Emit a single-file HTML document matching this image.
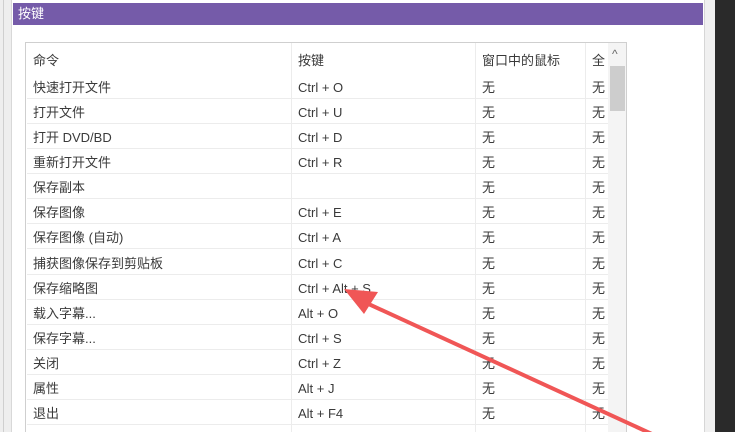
<!DOCTYPE html>
<html><head><meta charset="utf-8"><style>
html,body{margin:0;width:735px;height:432px;overflow:hidden}
body{background:#fff;font-family:"Liberation Sans","Noto Sans CJK SC",sans-serif;position:relative;font-size:13px;color:#3a3a3a}
.abs{position:absolute}
.row{position:absolute;left:27px;width:581px;height:25px;border-bottom:1px solid #ececec;box-sizing:border-box}
.row span{position:absolute;top:1px;height:25px;line-height:25px;white-space:nowrap}
.c1{left:6px}.c2{left:271px}.c3{left:455px}.c4{left:565px}
</style></head><body>
<div class="abs" style="left:0;top:0;width:11px;height:432px;background:#eeeeee"></div>
<div class="abs" style="left:3px;top:0;width:1px;height:432px;background:#cfcfcf"></div>
<div class="abs" style="left:11px;top:0;width:1px;height:432px;background:#d8d8d8"></div>
<div class="abs" style="left:13px;top:3px;width:690px;height:22px;background:#755ba9;color:#fff;font-size:13px;line-height:22px;padding-left:5px;box-sizing:border-box">按键</div>
<div class="abs" style="left:704px;top:0;width:11px;height:432px;background:#f0f0f0;border-left:1px solid #d6d6d6;box-sizing:border-box"></div>
<div class="abs" style="left:715px;top:0;width:20px;height:432px;background:#2a2a2a"></div>
<div class="abs" style="left:25px;top:42px;width:602px;height:390px;border:1px solid #cfcfcf;border-bottom:none;box-sizing:border-box"></div>
<div class="abs" style="left:291px;top:43px;width:1px;height:389px;background:#ececec"></div>
<div class="abs" style="left:475px;top:43px;width:1px;height:389px;background:#ececec"></div>
<div class="abs" style="left:585px;top:43px;width:1px;height:389px;background:#ececec"></div>
<div class="abs" style="left:608px;top:43px;width:18px;height:389px;background:#f4f4f4"></div>
<div class="abs" style="left:610px;top:66px;width:15px;height:45px;background:#cdcdcd"></div>
<div class="abs" style="left:612px;top:47px;font-size:12px;color:#666">^</div>
<div class="row" style="top:47px;border:none"><span class="c1">命令</span><span class="c2">按键</span><span class="c3">窗口中的鼠标</span><span class="c4">全</span></div>
<div class="row" style="top:74px"><span class="c1">快速打开文件</span><span class="c2">Ctrl + O</span><span class="c3">无</span><span class="c4">无</span></div>
<div class="row" style="top:99px"><span class="c1">打开文件</span><span class="c2">Ctrl + U</span><span class="c3">无</span><span class="c4">无</span></div>
<div class="row" style="top:124px"><span class="c1">打开 DVD/BD</span><span class="c2">Ctrl + D</span><span class="c3">无</span><span class="c4">无</span></div>
<div class="row" style="top:149px"><span class="c1">重新打开文件</span><span class="c2">Ctrl + R</span><span class="c3">无</span><span class="c4">无</span></div>
<div class="row" style="top:174px"><span class="c1">保存副本</span><span class="c2"></span><span class="c3">无</span><span class="c4">无</span></div>
<div class="row" style="top:199px"><span class="c1">保存图像</span><span class="c2">Ctrl + E</span><span class="c3">无</span><span class="c4">无</span></div>
<div class="row" style="top:224px"><span class="c1">保存图像 (自动)</span><span class="c2">Ctrl + A</span><span class="c3">无</span><span class="c4">无</span></div>
<div class="row" style="top:250px"><span class="c1">捕获图像保存到剪贴板</span><span class="c2">Ctrl + C</span><span class="c3">无</span><span class="c4">无</span></div>
<div class="row" style="top:275px"><span class="c1">保存缩略图</span><span class="c2">Ctrl + Alt + S</span><span class="c3">无</span><span class="c4">无</span></div>
<div class="row" style="top:300px"><span class="c1">载入字幕...</span><span class="c2">Alt + O</span><span class="c3">无</span><span class="c4">无</span></div>
<div class="row" style="top:325px"><span class="c1">保存字幕...</span><span class="c2">Ctrl + S</span><span class="c3">无</span><span class="c4">无</span></div>
<div class="row" style="top:350px"><span class="c1">关闭</span><span class="c2">Ctrl + Z</span><span class="c3">无</span><span class="c4">无</span></div>
<div class="row" style="top:375px"><span class="c1">属性</span><span class="c2">Alt + J</span><span class="c3">无</span><span class="c4">无</span></div>
<div class="row" style="top:400px"><span class="c1">退出</span><span class="c2">Alt + F4</span><span class="c3">无</span><span class="c4">无</span></div>
<svg class="abs" style="left:0;top:0" width="735" height="432">
<line x1="665" y1="440" x2="362" y2="301" stroke="#f05656" stroke-width="4"/>
<polygon points="344,289 378,292 364,314" fill="#f05656"/>
</svg>
</body></html>
